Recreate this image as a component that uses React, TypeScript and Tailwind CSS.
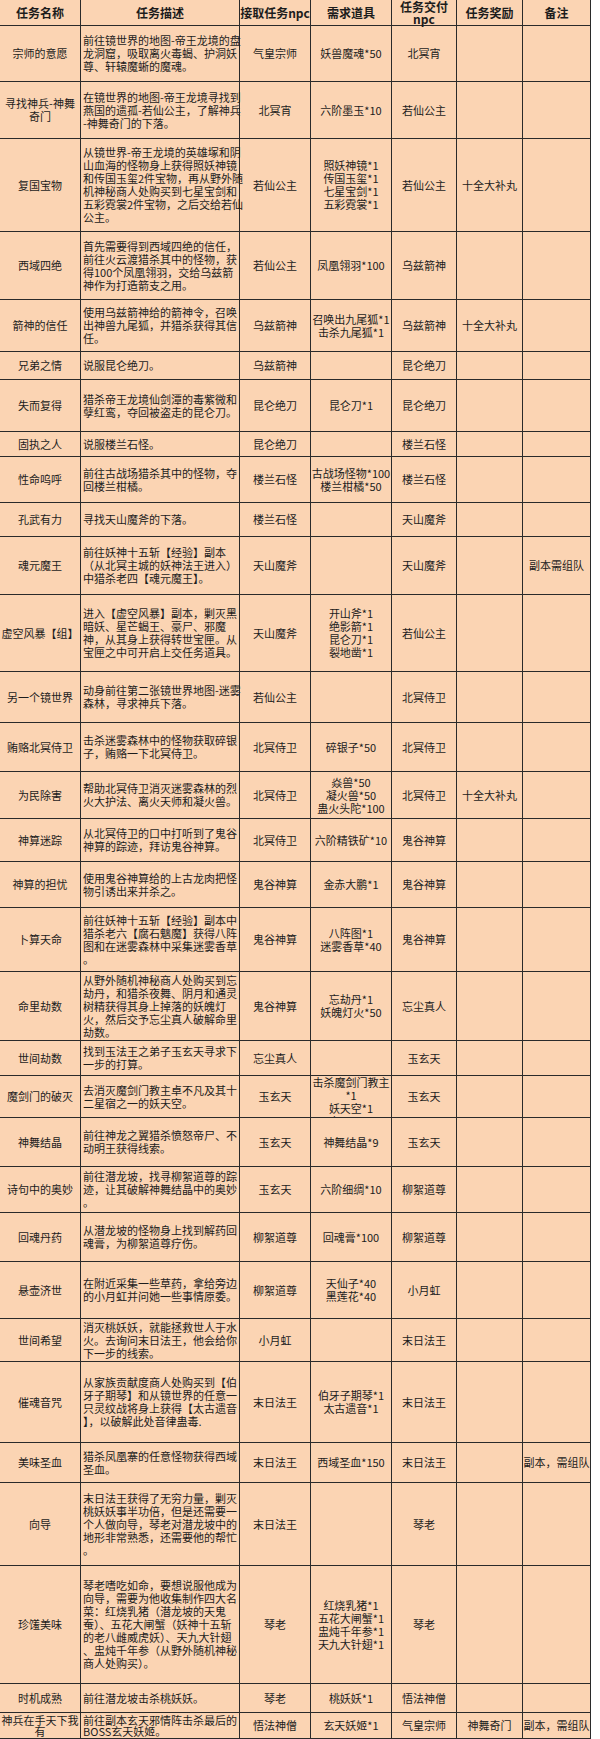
import React from "react";

type Row = {
  h: string;
  name: string[];
  desc: string[];
  take: string;
  items: string[];
  give: string;
  reward: string;
  note: string;
  itemsTop?: boolean;
  tight?: boolean;
};

const rows: Row[] = [
  { h: "h-[56px]", name: ["宗师的意愿"], desc: ["前往镜世界的地图-帝王龙境的盘", "龙洞窟，吸取离火毒蝎、护洞妖", "尊、轩辕魔蜥的魔魂。"], take: "气皇宗师", items: ["妖兽魔魂*50"], give: "北冥宵", reward: "", note: "" },
  { h: "h-[57px]", name: ["寻找神兵-神舞", "奇门"], desc: ["在镜世界的地图-帝王龙境寻找到", "燕国的遗孤-若仙公主，了解神兵", "-神舞奇门的下落。"], take: "北冥宵", items: ["六阶墨玉*10"], give: "若仙公主", reward: "", note: "" },
  { h: "h-[93px]", name: ["复国宝物"], desc: ["从镜世界-帝王龙境的英雄塚和阴", "山血海的怪物身上获得照妖神镜", "和传国玉玺2件宝物，再从野外随", "机神秘商人处购买到七星宝剑和", "五彩霓裳2件宝物，之后交给若仙", "公主。"], take: "若仙公主", items: ["照妖神镜*1", "传国玉玺*1", "七星宝剑*1", "五彩霓裳*1"], give: "若仙公主", reward: "十全大补丸", note: "" },
  { h: "h-[68px]", name: ["西域四绝"], desc: ["首先需要得到西域四绝的信任，", "前往火云渡猎杀其中的怪物，获", "得100个凤凰翎羽，交给乌兹箭", "神作为打造箭支之用。"], take: "若仙公主", items: ["凤凰翎羽*100"], give: "乌兹箭神", reward: "", note: "" },
  { h: "h-[52px]", name: ["箭神的信任"], desc: ["使用乌兹箭神给的箭神令，召唤", "出神兽九尾狐，并猎杀获得其信", "任。"], take: "乌兹箭神", items: ["召唤出九尾狐*1", "击杀九尾狐*1"], give: "乌兹箭神", reward: "十全大补丸", note: "" },
  { h: "h-[28px]", name: ["兄弟之情"], desc: ["说服昆仑绝刀。"], take: "乌兹箭神", items: [], give: "昆仑绝刀", reward: "", note: "" },
  { h: "h-[52px]", name: ["失而复得"], desc: ["猎杀帝王龙境仙剑潭的毒紫微和", "孽红鸾，夺回被盗走的昆仑刀。"], take: "昆仑绝刀", items: ["昆仑刀*1"], give: "昆仑绝刀", reward: "", note: "" },
  { h: "h-[25px]", name: ["固执之人"], desc: ["说服楼兰石怪。"], take: "昆仑绝刀", items: [], give: "楼兰石怪", reward: "", note: "" },
  { h: "h-[46px]", name: ["性命呜呼"], desc: ["前往古战场猎杀其中的怪物，夺", "回楼兰柑橘。"], take: "楼兰石怪", items: ["古战场怪物*100", "楼兰柑橘*50"], give: "楼兰石怪", reward: "", note: "" },
  { h: "h-[34px]", name: ["孔武有力"], desc: ["寻找天山魔斧的下落。"], take: "楼兰石怪", items: [], give: "天山魔斧", reward: "", note: "" },
  { h: "h-[58px]", name: ["魂元魔王"], desc: ["前往妖神十五斩【经验】副本", "（从北冥主城的妖神法王进入）", "中猎杀老四【魂元魔王】。"], take: "天山魔斧", items: [], give: "天山魔斧", reward: "", note: "副本需组队" },
  { h: "h-[77px]", name: ["虚空风暴【组】"], desc: ["进入【虚空风暴】副本，剿灭黑", "暗妖、星芒蝎王、豪尸、邪魔", "神，从其身上获得转世宝匣。从", "宝匣之中可开启上交任务道具。"], take: "天山魔斧", items: ["开山斧*1", "绝影箭*1", "昆仑刀*1", "裂地凿*1"], give: "若仙公主", reward: "", note: "" },
  { h: "h-[51px]", name: ["另一个镜世界"], desc: ["动身前往第二张镜世界地图-迷雾", "森林，寻求神兵下落。"], take: "若仙公主", items: [], give: "北冥侍卫", reward: "", note: "" },
  { h: "h-[49px]", name: ["贿赂北冥侍卫"], desc: ["击杀迷雾森林中的怪物获取碎银", "子，贿赂一下北冥侍卫。"], take: "北冥侍卫", items: ["碎银子*50"], give: "北冥侍卫", reward: "", note: "" },
  { h: "h-[47px]", name: ["为民除害"], desc: ["帮助北冥侍卫消灭迷雾森林的烈", "火大护法、离火天师和凝火兽。"], take: "北冥侍卫", items: ["焱兽*50", "凝火兽*50", "蛊火头陀*100"], give: "北冥侍卫", reward: "十全大补丸", note: "" },
  { h: "h-[43px]", name: ["神算迷踪"], desc: ["从北冥侍卫的口中打听到了鬼谷", "神算的踪迹，拜访鬼谷神算。"], take: "北冥侍卫", items: ["六阶精铁矿*10"], give: "鬼谷神算", reward: "", note: "" },
  { h: "h-[46px]", name: ["神算的担忧"], desc: ["使用鬼谷神算给的上古龙肉把怪", "物引诱出来并杀之。"], take: "鬼谷神算", items: ["金赤大鹏*1"], give: "鬼谷神算", reward: "", note: "" },
  { h: "h-[64px]", name: ["卜算天命"], desc: ["前往妖神十五斩【经验】副本中", "猎杀老六【腐石魑魔】获得八阵", "图和在迷雾森林中采集迷雾香草", "。"], take: "鬼谷神算", items: ["八阵图*1", "迷雾香草*40"], give: "鬼谷神算", reward: "", note: "" },
  { h: "h-[69px]", name: ["命里劫数"], desc: ["从野外随机神秘商人处购买到忘", "劫丹，和猎杀夜舞、阴月和通灵", "树精获得其身上掉落的妖魄灯", "火，然后交予忘尘真人破解命里", "劫数。"], take: "鬼谷神算", items: ["忘劫丹*1", "妖魄灯火*50"], give: "忘尘真人", reward: "", note: "" },
  { h: "h-[35px]", name: ["世间劫数"], desc: ["找到玉法王之弟子玉玄天寻求下", "一步的打算。"], take: "忘尘真人", items: [], give: "玉玄天", reward: "", note: "" },
  { h: "h-[42px]", name: ["魔剑门的破灭"], desc: ["去消灭魔剑门教主卓不凡及其十", "二星宿之一的妖天空。"], take: "玉玄天", items: ["击杀魔剑门教主", "*1", "妖天空*1", "卓不凡*1"], give: "玉玄天", reward: "", note: "", itemsTop: true },
  { h: "h-[49px]", name: ["神舞结晶"], desc: ["前往神龙之翼猎杀愤怒帝尸、不", "动明王获得线索。"], take: "玉玄天", items: ["神舞结晶*9"], give: "玉玄天", reward: "", note: "" },
  { h: "h-[46px]", name: ["诗句中的奥妙"], desc: ["前往潜龙坡，找寻柳絮道尊的踪", "迹，让其破解神舞结晶中的奥妙", "。"], take: "玉玄天", items: ["六阶细绸*10"], give: "柳絮道尊", reward: "", note: "" },
  { h: "h-[49px]", name: ["回魂丹药"], desc: ["从潜龙坡的怪物身上找到解药回", "魂膏，为柳絮道尊疗伤。"], take: "柳絮道尊", items: ["回魂膏*100"], give: "柳絮道尊", reward: "", note: "" },
  { h: "h-[57px]", name: ["悬壶济世"], desc: ["在附近采集一些草药，拿给旁边", "的小月虹并问她一些事情原委。"], take: "柳絮道尊", items: ["天仙子*40", "黑莲花*40"], give: "小月虹", reward: "", note: "" },
  { h: "h-[43px]", name: ["世间希望"], desc: ["消灭桃妖妖，就能拯救世人于水", "火。去询问末日法王，他会给你", "下一步的线索。"], take: "小月虹", items: [], give: "末日法王", reward: "", note: "" },
  { h: "h-[81px]", name: ["催魂音咒"], desc: ["从家族贡献度商人处购买到【伯", "牙子期琴】和从镜世界的任意一", "只灵纹战将身上获得【太古遗音", "】，以破解此处音律蛊毒."], take: "末日法王", items: ["伯牙子期琴*1", "太古遗音*1"], give: "末日法王", reward: "", note: "" },
  { h: "h-[40px]", name: ["美味圣血"], desc: ["猎杀凤凰寨的任意怪物获得西域", "圣血。"], take: "末日法王", items: ["西域圣血*150"], give: "末日法王", reward: "", note: "副本，需组队" },
  { h: "h-[83px]", name: ["向导"], desc: ["末日法王获得了无穷力量，剿灭", "桃妖妖事半功倍，但是还需要一", "个人做向导，琴老对潜龙坡中的", "地形非常熟悉，还需要他的帮忙", "。"], take: "末日法王", items: [], give: "琴老", reward: "", note: "" },
  { h: "h-[118px]", name: ["珍馐美味"], desc: ["琴老嗜吃如命，要想说服他成为", "向导，需要为他收集制作四大名", "菜：红烧乳猪（潜龙坡的天鬼", "蚕）、五花大闸蟹（妖神十五斩", "的老八雌威虎妖）、天九大针翅", "、盅炖千年参（从野外随机神秘", "商人处购买）。"], take: "琴老", items: ["红烧乳猪*1", "五花大闸蟹*1", "盅炖千年参*1", "天九大针翅*1"], give: "琴老", reward: "", note: "" },
  { h: "h-[29px]", name: ["时机成熟"], desc: ["前往潜龙坡击杀桃妖妖。"], take: "琴老", items: ["桃妖妖*1"], give: "悟法神僧", reward: "", note: "" },
  { h: "h-[26px]", name: ["神兵在手天下我", "有"], desc: ["前往副本玄天邪情阵击杀最后的", "BOSS玄天妖姬。"], take: "悟法神僧", items: ["玄天妖姬*1"], give: "气皇宗师", reward: "神舞奇门", note: "副本，需组队", tight: true },
];

function Lines({ lines }: { lines: string[] }) {
  return (
    <div>
      {lines.map((l, i) => (
        <div key={i} className="whitespace-nowrap">
          {l}
        </div>
      ))}
    </div>
  );
}

const cellBase = "border-r border-b border-[#2a2a2a] overflow-visible";
const center = "flex items-center justify-center text-center";

export default function App() {
  return (
    <div
      className="w-[600px] h-[1739px] bg-white overflow-hidden text-[#1c1c1c]"
      style={{ fontFamily: '"Noto Sans CJK SC", "Noto Sans", sans-serif' }}
    >
      <div className="w-[591px] bg-[#fbd4b3]">
        <div className="flex h-[26px] text-[12px] leading-[12px] font-bold">
          <div className={`${cellBase} ${center} w-[81px]`}>任务名称</div>
          <div className={`${cellBase} ${center} w-[159px]`}>任务描述</div>
          <div className={`${cellBase} ${center} w-[71px] whitespace-nowrap`}>接取任务npc</div>
          <div className={`${cellBase} ${center} w-[81px]`}>需求道具</div>
          <div className={`${cellBase} ${center} w-[65px]`}>
            <div>
              <div>任务交付</div>
              <div>npc</div>
            </div>
          </div>
          <div className={`${cellBase} ${center} w-[66px]`}>任务奖励</div>
          <div className={`${cellBase} ${center} w-[68px]`}>备注</div>
        </div>
        {rows.map((r, i) => (
          <div
            key={i}
            className={`flex ${r.h} text-[11px] ${r.tight ? "leading-[11px]" : "leading-[13px]"}`}
          >
            <div className={`${cellBase} ${center} w-[81px]`}>
              <Lines lines={r.name} />
            </div>
            <div className={`${cellBase} flex items-center justify-start w-[159px] pl-[2px]`}>
              <Lines lines={r.desc} />
            </div>
            <div className={`${cellBase} ${center} w-[71px]`}>{r.take}</div>
            <div
              className={`border-r border-b border-[#2a2a2a] flex ${r.itemsTop ? "items-start overflow-hidden" : "items-center"} justify-center text-center w-[81px]`}
            >
              <Lines lines={r.items} />
            </div>
            <div className={`${cellBase} ${center} w-[65px]`}>{r.give}</div>
            <div className={`${cellBase} ${center} w-[66px]`}>{r.reward}</div>
            <div className={`${cellBase} ${center} w-[68px]`}>{r.note}</div>
          </div>
        ))}
      </div>
    </div>
  );
}
